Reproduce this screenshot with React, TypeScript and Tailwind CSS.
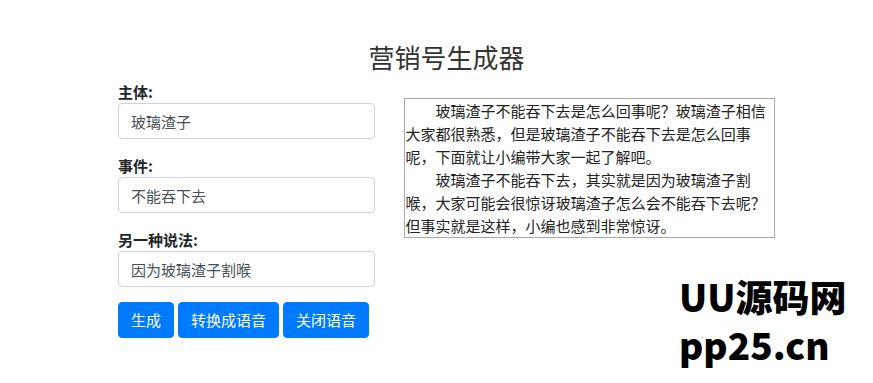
import { useState } from "react";

const FONT = { fontFamily: '"Noto Sans CJK SC", "Noto Sans", sans-serif' };

function Field({ label, value }: { label: string; value: string }) {
  return (
    <div className="mb-4">
      <div className="text-[15px] leading-[22px] font-bold text-[#212529]">{label}</div>
      <input
        readOnly
        value={value}
        className="block h-9 w-full rounded border border-[#ced4da] bg-white px-3 text-[15px] text-[#495057] outline-none"
        style={FONT}
      />
    </div>
  );
}

export default function App() {
  const [subject] = useState("玻璃渣子");
  const [event] = useState("不能吞下去");
  const [reason] = useState("因为玻璃渣子割喉");

  return (
    <div className="relative h-[383px] w-[873px] overflow-hidden bg-white" style={FONT}>
      <div className="ml-[118px] w-[657px] pt-[41px]">
        <h1 className="text-center text-[26px] leading-[32px] font-normal text-[#333]">营销号生成器</h1>
        <div className="mt-[8px] flex items-start gap-[29px]">
          <div className="w-[257px]">
            <Field label="主体:" value={subject} />
            <Field label="事件:" value={event} />
            <Field label="另一种说法:" value={reason} />
            <div className="-mt-[1px] flex gap-1">
              {["生成", "转换成语音", "关闭语音"].map((t) => (
                <button
                  key={t}
                  className="h-9 rounded border border-[#007bff] bg-[#007bff] px-3 text-[15px] text-white"
                  style={FONT}
                >
                  {t}
                </button>
              ))}
            </div>
          </div>
          <div className="mt-[17px] w-[372px] border border-[#a9a9a9] pl-[1px] text-[15px] leading-[23px] text-[#222]">
            <p className="indent-[2em]">
              {subject}{event}是怎么回事呢？{subject}相信大家都很熟悉，但是{subject}{event}是怎么回事呢，下面就让小编带大家一起了解吧。
            </p>
            <p className="indent-[2em]">
              {subject}{event}，其实就是{reason}，大家可能会很惊讶{subject}怎么会{event}呢？但事实就是这样，小编也感到非常惊讶。
            </p>
          </div>
        </div>
      </div>
      <div className="absolute left-[679px] top-[272px] text-[37px] leading-[48px] font-black text-black">
        <div>UU源码网</div>
        <div>pp25.cn</div>
      </div>
    </div>
  );
}
